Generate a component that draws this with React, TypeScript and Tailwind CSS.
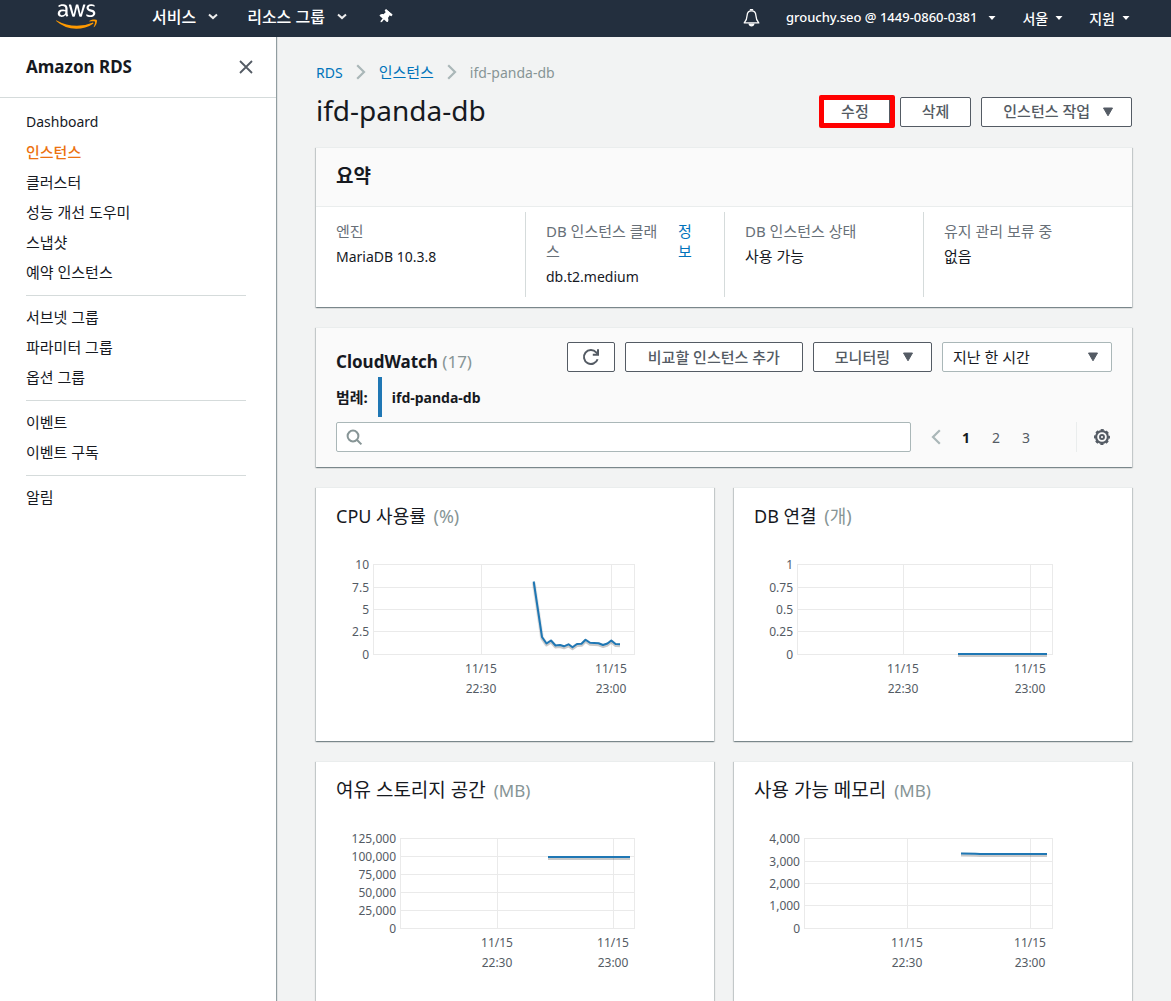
import React from "react";
import { FaAws, FaThumbtack } from "react-icons/fa";

type Series = {
  title: string;
  unit: string;
  wide?: boolean;
  left: number;
  right: number;
  rows: { label: string; y: number }[];
  ticks: { x: number; time: string }[];
  line: string;
};

const charts: Series[] = [
  {
    title: "CPU 사용률",
    unit: "(%)",
    left: 37,
    right: 298,
    rows: [
      { label: "10", y: 20 },
      { label: "7.5", y: 43 },
      { label: "5", y: 65 },
      { label: "2.5", y: 87 },
      { label: "0", y: 110 },
    ],
    ticks: [
      { x: 145, time: "22:30" },
      { x: 275, time: "23:00" },
    ],
    line: "197.7,37.5 206,93 210.5,99.5 215,96.5 219.5,101.5 224,101 228,102.3 232.5,100.3 236.5,103.2 241,100 245.5,99.8 249.5,95.7 254,98.8 262.5,99.2 267,101 271.5,99.5 275.3,96.5 279.5,100 284,100.2",
  },
  {
    title: "DB 연결",
    unit: "(개)",
    left: 43,
    right: 298,
    rows: [
      { label: "1", y: 20 },
      { label: "0.75", y: 43 },
      { label: "0.5", y: 65 },
      { label: "0.25", y: 87 },
      { label: "0", y: 110 },
    ],
    ticks: [
      { x: 149, time: "22:30" },
      { x: 276, time: "23:00" },
    ],
    line: "204,110 293,110",
  },
  {
    title: "여유 스토리지 공간",
    unit: "(MB)",
    wide: true,
    left: 64,
    right: 298,
    rows: [
      { label: "125,000", y: 20 },
      { label: "100,000", y: 38 },
      { label: "75,000", y: 56 },
      { label: "50,000", y: 74 },
      { label: "25,000", y: 92 },
      { label: "0", y: 110 },
    ],
    ticks: [
      { x: 161, time: "22:30" },
      { x: 277, time: "23:00" },
    ],
    line: "212,39 294,39",
  },
  {
    title: "사용 가능 메모리",
    unit: "(MB)",
    wide: true,
    left: 50,
    right: 298,
    rows: [
      { label: "4,000", y: 20 },
      { label: "3,000", y: 43 },
      { label: "2,000", y: 65 },
      { label: "1,000", y: 87 },
      { label: "0", y: 110 },
    ],
    ticks: [
      { x: 153, time: "22:30" },
      { x: 276, time: "23:00" },
    ],
    line: "207,35.5 221,35.7 226,36 293,36",
  },
];

const cardShadow =
  "border-t border-[#eaeded] shadow-[0_1px_1px_0_rgba(0,28,36,0.3),1px_1px_1px_0_rgba(0,28,36,0.15),-1px_1px_1px_0_rgba(0,28,36,0.15)]";

const outlineButton =
  "flex h-[30px] items-center justify-center rounded-[2px] border border-[#545b64] bg-white text-[15px] font-medium text-[#545b64]";

function Caret({ className = "" }: { className?: string }) {
  return (
    <svg className={className} width="12" height="10" viewBox="0 0 12 10" aria-hidden="true">
      <path d="M1.5 1h9L6 8.8z" fill="#545b64" stroke="#545b64" strokeWidth="1" strokeLinejoin="round" />
    </svg>
  );
}

function NavCaret({ small = false }: { small?: boolean }) {
  return small ? (
    <svg width="8" height="6" viewBox="0 0 8 6" aria-hidden="true">
      <path d="M0.5 1h7L4 5z" fill="#fff" />
    </svg>
  ) : (
    <svg width="10" height="7" viewBox="0 0 10 7" fill="none" aria-hidden="true">
      <path d="M1 1.5l4 3.6 4-3.6" stroke="#eee" strokeWidth="2" />
    </svg>
  );
}

function Crumb() {
  return (
    <svg width="10" height="16" viewBox="0 0 10 16" fill="none" aria-hidden="true">
      <path d="M1.2 1.2L8 8l-6.8 6.8" stroke="#aab7b8" strokeWidth="2.2" />
    </svg>
  );
}

function Gear() {
  return (
    <svg width="16" height="16" viewBox="0 0 16 16" fill="none" stroke="#545b64" aria-hidden="true">
      <circle cx="8" cy="8" r="5.9" strokeWidth="2.2" />
      <circle cx="8" cy="8" r="7.1" strokeWidth="1.8" strokeDasharray="3.1 2.477" strokeDashoffset="1.55" />
      <circle cx="8" cy="8" r="2" strokeWidth="1.9" />
    </svg>
  );
}

function TopBar() {
  return (
    <header className="flex h-[37px] shrink-0 items-center bg-[#232f3e] text-white">
      <a href="#home" aria-label="AWS" className="ml-14 block h-[37px] w-[41px]">
        <svg width="0" height="0" className="absolute" aria-hidden="true">
          <linearGradient id="aws-fill" x1="0" y1="0" x2="0" y2="1">
            <stop offset="0.62" stopColor="#fff" />
            <stop offset="0.62" stopColor="#ff9900" />
          </linearGradient>
        </svg>
        <FaAws className="h-[33px] w-[41px] [fill:url(#aws-fill)]" />
      </a>
      <nav className="flex flex-1 items-center pb-1 text-[16px] font-medium">
        <button className="ml-[55px] flex items-center gap-3">
          서비스 <NavCaret />
        </button>
        <button className="ml-[29px] flex items-center gap-3">
          리소스 그룹 <NavCaret />
        </button>
        <button className="ml-[31px]" aria-label="고정">
          <FaThumbtack className="size-[14px] rotate-[40deg]" />
        </button>
      </nav>
      <div className="flex items-center pb-px text-[13px] font-medium">
        <button aria-label="알림" className="mr-[26px]">
          <svg width="17" height="18" viewBox="0 0 17 18" fill="none" stroke="#fff" strokeWidth="1.3" aria-hidden="true">
            <path d="M8.500 1.800C5.400 1.800 4.200 4 4.100 6.500 4 10 3.300 11.700 1.200 13.900h14.600C13.700 11.700 13 10 12.900 6.500 12.800 4 11.600 1.800 8.500 1.800z" strokeLinejoin="round" />
            <path d="M7.200 1.200a1.400 1.400 0 0 1 2.600 0M6.300 15.200a2.300 2.300 0 0 0 4.400 0z" fill="#fff" />
          </svg>
        </button>
        <button className="flex items-center gap-[11px]">
          grouchy.seo @ 1449-0860-0381 <NavCaret small />
        </button>
        <button className="ml-[26px] flex items-center gap-[7px] text-[14px]">
          서울 <NavCaret small />
        </button>
        <button className="mr-[41px] ml-[26px] flex items-center gap-[7px] text-[14px]">
          지원 <NavCaret small />
        </button>
      </div>
    </header>
  );
}

const menu: string[][] = [
  ["Dashboard", "인스턴스", "클러스터", "성능 개선 도우미", "스냅샷", "예약 인스턴스"],
  ["서브넷 그룹", "파라미터 그룹", "옵션 그룹"],
  ["이벤트", "이벤트 구독"],
  ["알림"],
];

function Sidebar() {
  return (
    <aside className="z-10 w-[276px] shrink-0 bg-white shadow-[1px_0_1px_0_rgba(0,28,36,0.4)]">
      <div className="flex h-[61px] items-center justify-between border-b border-[#d5dbdb] pr-[23px] pl-[26px]">
        <h2 className="text-[17px] font-bold">Amazon RDS</h2>
        <button aria-label="닫기">
          <svg width="14" height="14" viewBox="0 0 14 14" stroke="#545b64" strokeWidth="1.8" aria-hidden="true">
            <path d="M1 1l12 12M13 1L1 13" />
          </svg>
        </button>
      </div>
      <nav className="pt-[9px] pr-[30px] pl-[26px]">
        {menu.map((group, i) => (
          <ul key={group[0]} className={i > 0 ? "mt-2 border-t border-[#d5dbdb] pt-[6px]" : ""}>
            {group.map((item) => (
              <li key={item} className="h-[30px]">
                <a
                  href="#menu"
                  className={
                    item === "인스턴스"
                      ? "text-[15px] leading-[30px] font-medium text-[#ec7211]"
                      : item === "Dashboard"
                        ? "text-[14px] leading-[30px]"
                        : "text-[15px] leading-[30px]"
                  }
                >
                  {item}
                </a>
              </li>
            ))}
          </ul>
        ))}
      </nav>
    </aside>
  );
}

function Summary() {
  const label = "text-[15px] leading-5 text-[#687078]";
  const cell = "border-l border-[#d5dbdb] py-[9px] pr-5 pl-5";
  return (
    <section className={`bg-white ${cardShadow}`}>
      <h2 className="flex h-[59px] items-center border-b border-[#eaeded] bg-[#fafafa] px-5 pb-[2px] text-[19px] font-bold">
        요약
      </h2>
      <dl className="mx-[10px] grid grid-cols-4 pt-[5px] pb-[10px]">
        <div className="py-[9px] pl-[10px]">
          <dt className={label}>엔진</dt>
          <dd className="mt-[5px] text-[14px] leading-[22px]">MariaDB 10.3.8</dd>
        </div>
        <div className={cell}>
          <dt className={`flex gap-5 ${label}`}>
            <span className="flex-1">DB 인스턴스 클래스</span>
            <a href="#info" className="w-[26px] text-[#0073bb]">
              정보
            </a>
          </dt>
          <dd className="mt-[5px] text-[14px] leading-[22px]">db.t2.medium</dd>
        </div>
        <div className={cell}>
          <dt className={label}>DB 인스턴스 상태</dt>
          <dd className="mt-[5px] text-[15px] leading-5">사용 가능</dd>
        </div>
        <div className={cell}>
          <dt className={label}>유지 관리 보류 중</dt>
          <dd className="mt-[5px] text-[15px] leading-5">없음</dd>
        </div>
      </dl>
    </section>
  );
}

function CloudWatch() {
  return (
    <section className={`mt-5 bg-[#fafafa] px-5 pt-[14px] pb-[15px] ${cardShadow}`}>
      <div className="flex h-[35px] items-start gap-[10px]">
        <h2 className="mt-2 flex-1 text-[17px] leading-6 font-bold">
          CloudWatch <span className="font-normal text-[#879596]">(17)</span>
        </h2>
        <button aria-label="새로 고침" className={`w-12 ${outlineButton}`}>
          <svg width="18" height="18" viewBox="0 0 18 18" fill="none" stroke="#545b64" strokeWidth="2" aria-hidden="true">
            <path d="M15.600 11.200A7 7 0 1 1 14.200 4.300L16 6.300" />
            <path d="M16 1.200v5.600h-5.200" />
          </svg>
        </button>
        <button className={`px-[22px] ${outlineButton}`}>비교할 인스턴스 추가</button>
        <button className={`gap-3 pr-[17px] pl-[21px] ${outlineButton}`}>
          모니터링 <Caret />
        </button>
        <div className="relative w-[170px]">
          <select
            aria-label="기간"
            className="h-[30px] w-full appearance-none rounded-[2px] border border-[#aab7b8] bg-white px-[10px] text-[15px] leading-5 text-[#16191f]"
          >
            <option>지난 한 시간</option>
          </select>
          <Caret className="pointer-events-none absolute top-[10px] right-[13px]" />
        </div>
      </div>
      <div className="flex h-10 items-center text-[14px] font-bold">
        <span className="text-[15px]">범례:</span>
        <span className="ml-[10px] h-10 w-1 bg-[#1f77b4]" />
        <span className="ml-[10px]">ifd-panda-db</span>
      </div>
      <div className="mt-[5px] flex items-center">
        <label className="relative block flex-1">
          <svg
            className="absolute top-[7px] left-[10px]"
            width="17"
            height="17"
            viewBox="0 0 17 17"
            fill="none"
            stroke="#879596"
            strokeWidth="2"
            aria-hidden="true"
          >
            <circle cx="7" cy="7" r="5.400" />
            <path d="M10.800 10.800l4.600 4.600" />
          </svg>
          <input
            type="search"
            aria-label="지표 검색"
            className="block h-[30px] w-full rounded-[2px] border border-[#aab7b8] bg-white pr-2 pl-9 text-[14px] outline-none"
          />
        </label>
        <nav aria-label="페이지" className="ml-[10px] flex text-[14px] text-[#545b64]">
          <button aria-label="이전" className="flex h-[30px] w-[30px] items-center justify-center">
            <svg width="10" height="16" viewBox="0 0 10 16" fill="none" aria-hidden="true">
              <path d="M8.800 1.200L2 8l6.800 6.800" stroke="#aab7b8" strokeWidth="2.2" />
            </svg>
          </button>
          <button className="w-[30px] font-bold text-[#16191f]">1</button>
          <button className="w-[30px]">2</button>
          <button className="w-[30px]">3</button>
        </nav>
        <div className="ml-[35px] flex h-[30px] items-center border-l border-[#eaeded] pr-[2px] pl-[17px]">
          <button aria-label="설정">
            <Gear />
          </button>
        </div>
      </div>
    </section>
  );
}

function Chart({ chart }: { chart: Series }) {
  const { left, right, rows, ticks, line } = chart;
  return (
    <article className={`h-[254px] bg-white px-5 pt-[14px] ${cardShadow}`}>
      <h3 className={chart.wide ? "h-7 text-[19px] leading-7" : "h-7 text-[18px] leading-7"}>
        {chart.title}{" "}
        <span className={chart.wide ? "ml-[3px] text-[17px] text-[#879596]" : "ml-[3px] text-[18px] text-[#879596]"}>
          {chart.unit}
        </span>
      </h3>
      <svg
        className="mt-[14px] text-[12px]"
        width="320"
        height="170"
        viewBox="0 0 320 170"
        fill="#545b64"
        role="img"
        aria-label={chart.title}
      >
        <g stroke="#eaeaea" shapeRendering="crispEdges">
          {rows.map((r) => (
            <line key={r.label} x1={left} x2={right} y1={r.y + 0.5} y2={r.y + 0.5} />
          ))}
          {[left, ...ticks.map((t) => t.x), right].map((x) => (
            <line key={x} x1={x + 0.5} x2={x + 0.5} y1="20" y2="111" />
          ))}
        </g>
        {rows.map((r) => (
          <text key={r.label} x={left - 4} y={r.y + 5} textAnchor="end">
            {r.label}
          </text>
        ))}
        {ticks.map((t) => (
          <g key={t.x} textAnchor="middle">
            <text x={t.x} y="129">
              11/15
            </text>
            <text x={t.x} y="149">
              {t.time}
            </text>
          </g>
        ))}
        <g fill="none" strokeLinejoin="round">
          <polyline points={line} stroke="#000" strokeOpacity="0.1" strokeWidth="4" transform="translate(0 1)" />
          <polyline points={line} stroke="#000" strokeOpacity="0.12" strokeWidth="2" transform="translate(0 2)" />
          <polyline points={line} stroke="#1f77b4" strokeWidth="2" />
        </g>
      </svg>
    </article>
  );
}

export default function App() {
  return (
    <div className="flex h-screen flex-col bg-[#f2f3f3] font-['Noto_Sans','Noto_Sans_CJK_KR',sans-serif] text-[#16191f]">
      <TopBar />
      <div className="flex min-h-0 flex-1">
        <Sidebar />
        <main className="min-w-0 flex-1 overflow-y-auto pr-[39px] pb-5 pl-10 [scrollbar-width:none]">
          <nav aria-label="경로" className="mt-[25px] flex h-5 items-center text-[14px] text-[#0073bb]">
            <a href="#rds">RDS</a>
            <span className="mx-[13px]">
              <Crumb />
            </span>
            <a href="#instances" className="text-[15px]">
              인스턴스
            </a>
            <span className="mx-[13px]">
              <Crumb />
            </span>
            <span className="text-[#879596]">ifd-panda-db</span>
          </nav>
          <div className="mt-[14px] mb-5 flex h-[31px] items-center gap-[10px]">
            <h1 className="flex-1 pb-1 text-[28px] leading-[30px]">ifd-panda-db</h1>
            <div className="relative">
              <button className={`px-5 ${outlineButton}`}>수정</button>
              <span className="pointer-events-none absolute -top-[2px] -right-[5px] -bottom-px -left-px rounded-[2px] border-[5px] border-[#ff0000]" />
            </div>
            <button className={`px-[21px] ${outlineButton}`}>삭제</button>
            <button className={`gap-3 pr-[17px] pl-[21px] ${outlineButton}`}>
              인스턴스 작업 <Caret />
            </button>
          </div>
          <Summary />
          <CloudWatch />
          <div className="mt-5 grid grid-cols-2 gap-5">
            {charts.map((c) => (
              <Chart key={c.title} chart={c} />
            ))}
          </div>
        </main>
      </div>
    </div>
  );
}
